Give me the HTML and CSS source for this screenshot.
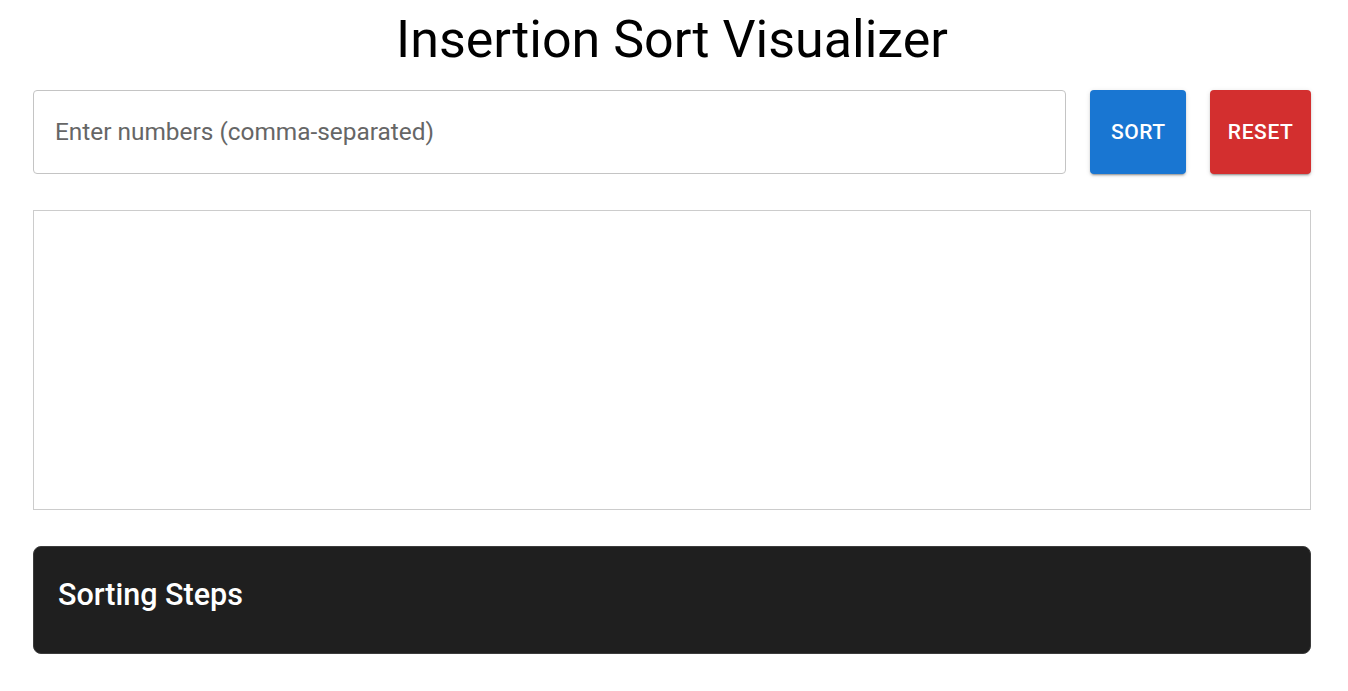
FILE: index.html
```html
<!DOCTYPE html>
<html lang="en">
<head>
<meta charset="utf-8">
<title>Insertion Sort Visualizer</title>
<link rel="stylesheet" href="styles.css">
</head>
<body>
<main class="page">
  <h1 class="title">Insertion Sort Visualizer</h1>
  <div class="controls">
    <div class="field">
      <input class="field-input" type="text" placeholder="Enter numbers (comma-separated)">
    </div>
    <button class="btn btn-sort">Sort</button>
    <button class="btn btn-reset">Reset</button>
  </div>
  <div class="canvas"></div>
  <section class="steps">
    <h2 class="steps-title">Sorting Steps</h2>
  </section>
</main>
</body>
</html>
```
FILE: styles.css
```css
* { box-sizing: border-box; }
html, body {
  margin: 0;
  padding: 0;
  background: #ffffff;
  font-family: Roboto, "Liberation Sans", Arial, sans-serif;
}
.page {
  padding: 10px 37px 0 33px;
  display: flex;
  flex-direction: column;
}
.title {
  margin: 0;
  text-align: center;
  font-weight: 400;
  font-size: 52px;
  line-height: 1.167;
  color: #000;
}
.controls {
  margin-top: 19px;
  display: flex;
  gap: 24px;
  height: 84px;
}
.field {
  flex: 1;
  border: 1px solid #c4c4c4;
  border-radius: 4px;
  display: flex;
}
.field-input {
  flex: 1;
  border: 0;
  outline: none;
  background: transparent;
  padding: 0 21px;
  font-family: inherit;
  font-size: 24.4px;
  color: #222;
}
.field-input::placeholder { color: #666666; opacity: 1; }
.btn {
  border: 0;
  border-radius: 4px;
  min-width: 96px;
  padding: 0 17.5px;
  font-family: inherit;
  font-size: 21px;
  font-weight: 500;
  letter-spacing: 0.02857em;
  text-transform: uppercase;
  color: #fff;
  box-shadow: 0 3px 1px -2px rgba(0,0,0,0.2), 0 2px 2px 0 rgba(0,0,0,0.14), 0 1px 5px 0 rgba(0,0,0,0.12);
}
.btn-sort { background: #1976d2; }
.btn-reset { background: #d32f2f; }
.canvas {
  margin-top: 36px;
  height: 300px;
  border: 1px solid #cccccc;
}
.steps {
  margin-top: 36px;
  background: #1f1f1f;
  border: 1px solid #3c3c3c;
  border-radius: 8px;
  height: 108px;
  padding: 28px 24px 0;
}
.steps-title {
  margin: 0;
  color: #fff;
  font-size: 30.5px;
  font-weight: 500;
  line-height: 1.334;
}
```
